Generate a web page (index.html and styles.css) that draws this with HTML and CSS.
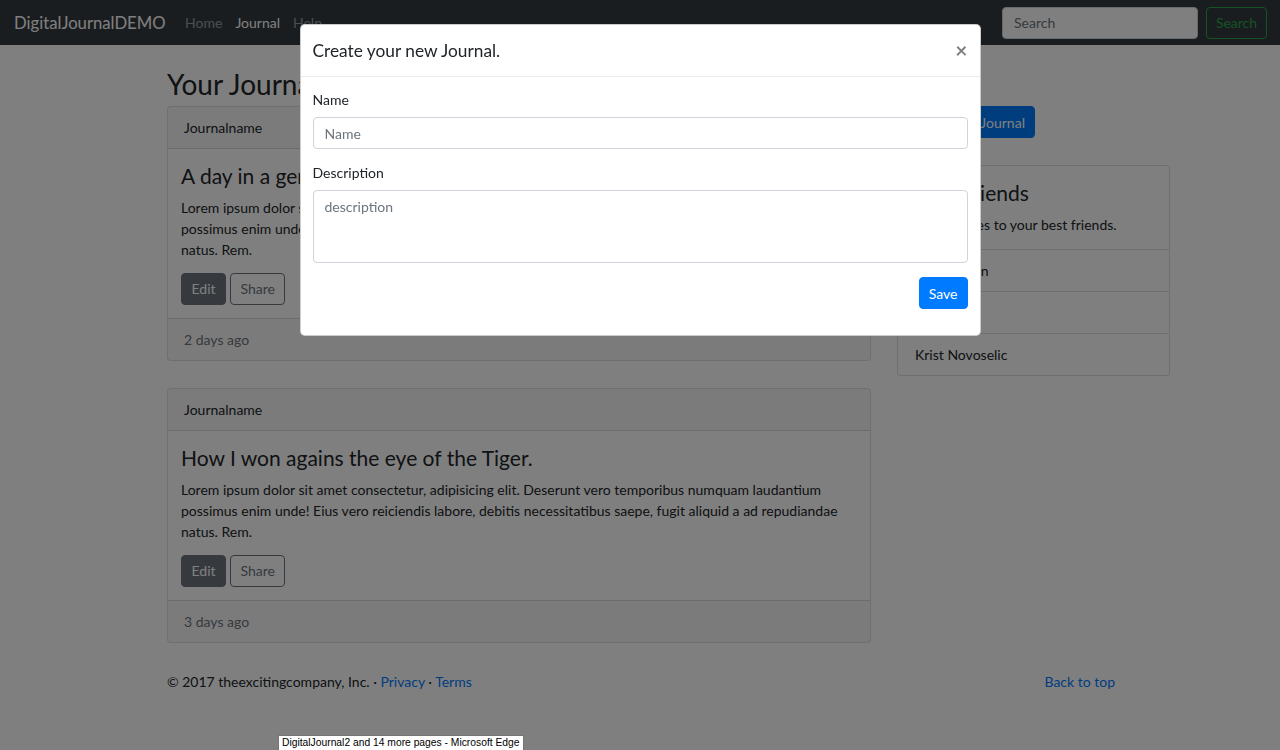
FILE: index.html
```html
<!DOCTYPE html>
<html lang="en">
<head>
<meta charset="utf-8">
<title>DigitalJournalDEMO</title>
<link rel="stylesheet" href="styles.css">
</head>
<body>
<nav class="navbar">
  <a class="brand" href="#">DigitalJournalDEMO</a>
  <ul class="nav-links">
    <li><a class="nav-link" href="#">Home</a></li>
    <li><a class="nav-link active" href="#">Journal</a></li>
    <li><a class="nav-link" href="#">Help</a></li>
  </ul>
  <form class="search-form">
    <input class="search-input" type="text" placeholder="Search">
    <button class="btn btn-outline-success" type="button">Search</button>
  </form>
</nav>

<main class="page">
  <div class="row">
    <section class="col-main">
      <h2 class="page-title">Your Journals</h2>

      <article class="card">
        <div class="card-header">Journalname</div>
        <div class="card-body">
          <h4 class="card-title">A day in a generic life.</h4>
          <p class="card-text">Lorem ipsum dolor sit amet consectetur, adipisicing elit. Deserunt vero temporibus numquam laudantium possimus enim unde! Eius vero reiciendis labore, debitis necessitatibus saepe, fugit aliquid a ad repudiandae natus. Rem.</p>
          <div class="card-actions">
            <button class="btn btn-secondary" type="button">Edit</button>
            <button class="btn btn-outline-secondary" type="button">Share</button>
          </div>
        </div>
        <div class="card-footer">2 days ago</div>
      </article>

      <article class="card">
        <div class="card-header">Journalname</div>
        <div class="card-body">
          <h4 class="card-title">How I won agains the eye of the Tiger.</h4>
          <p class="card-text">Lorem ipsum dolor sit amet consectetur, adipisicing elit. Deserunt vero temporibus numquam laudantium possimus enim unde! Eius vero reiciendis labore, debitis necessitatibus saepe, fugit aliquid a ad repudiandae natus. Rem.</p>
          <div class="card-actions">
            <button class="btn btn-secondary" type="button">Edit</button>
            <button class="btn btn-outline-secondary" type="button">Share</button>
          </div>
        </div>
        <div class="card-footer">3 days ago</div>
      </article>
    </section>

    <aside class="col-side">
      <button class="btn btn-primary create-btn" type="button">Create new Journal</button>
      <div class="card side-card">
        <div class="card-body side-body">
          <h4 class="card-title">Best Friends</h4>
          <p class="card-text side-text">Send stories to your best friends.</p>
        </div>
        <ul class="list-group">
          <li class="list-item">Kurt Cobain</li>
          <li class="list-item">Pat Smear</li>
          <li class="list-item">Krist Novoselic</li>
        </ul>
      </div>
    </aside>
  </div>

  <footer class="site-footer">
    <p class="footer-copy">&copy; 2017 theexcitingcompany, Inc. &middot; <a href="#">Privacy</a> &middot; <a href="#">Terms</a></p>
    <p class="footer-top"><a href="#">Back to top</a></p>
  </footer>
</main>

<div class="modal-backdrop"></div>
<div class="modal">
  <div class="modal-dialog">
    <div class="modal-header">
      <h5 class="modal-title">Create your new Journal.</h5>
      <button class="close" type="button" aria-label="Close">&times;</button>
    </div>
    <div class="modal-body">
      <div class="form-group">
        <label class="form-label" for="jname">Name</label>
        <input class="form-control" id="jname" type="text" placeholder="Name">
      </div>
      <div class="form-group">
        <label class="form-label" for="jdesc">Description</label>
        <textarea class="form-control textarea" id="jdesc" placeholder="description"></textarea>
      </div>
      <div class="form-actions">
        <button class="btn btn-primary save-btn" type="button">Save</button>
      </div>
    </div>
  </div>
</div>

<div class="taskbar-tip">DigitalJournal2 and 14 more pages - Microsoft Edge</div>
</body>
</html>
```

FILE: styles.css
```css
* { box-sizing: border-box; }

html, body {
  margin: 0;
  padding: 0;
  height: 100%;
  overflow: hidden;
}

body {
  font-family: Lato, "Noto Sans", sans-serif;
  font-size: 14px;
  line-height: 1.5;
  color: #212529;
  background: #fff;
}

a { color: #007bff; text-decoration: none; }

/* ---------- navbar ---------- */
.navbar {
  height: 45px;
  background: #343a40;
  display: flex;
  align-items: center;
  padding: 0 13px 0 14px;
}
.brand {
  color: #fff;
  font-size: 16.7px;
  line-height: 26px;
  margin-right: 13px;
}
.nav-links {
  display: flex;
  list-style: none;
  margin: 0;
  padding: 0;
  flex: 1;
}
.nav-link {
  display: block;
  padding: 0 6.5px;
  color: rgba(255,255,255,.5);
}
.nav-link.active { color: #fff; }

.search-form {
  display: flex;
  align-items: center;
  gap: 8px;
}
.search-input {
  width: 196px;
  height: 32px;
  border: 1px solid #ced4da;
  border-radius: 4px;
  padding: 4px 11px;
  font: inherit;
  color: #495057;
  background: #fff;
}
.search-input::placeholder { color: #6c757d; }

/* ---------- buttons ---------- */
.btn {
  display: inline-block;
  font: inherit;
  line-height: 21px;
  padding: 4.5px 9.5px;
  border: 1px solid transparent;
  border-radius: 4px;
  background: transparent;
  cursor: pointer;
}
.btn-outline-success {
  color: #28a745;
  border-color: #28a745;
  width: 61px;
  height: 32px;
  padding: 0;
}
.btn-secondary {
  color: #fff;
  background: #6c757d;
  border-color: #6c757d;
}
.btn-outline-secondary {
  color: #6c757d;
  border-color: #6c757d;
}
.btn-primary {
  color: #fff;
  background: #007bff;
  border-color: #007bff;
}

/* ---------- page layout ---------- */
.page {
  margin-left: 167px;
  width: 1003px;
  padding-top: 23px;
}
.row {
  display: flex;
  gap: 26px;
  align-items: flex-start;
}
.col-main { width: 704px; }
.col-side {
  width: 273px;
  padding-top: 38px;
}

.page-title {
  font-size: 28px;
  font-weight: 400;
  line-height: 1.2;
  margin: 0 0 4px;
}

/* ---------- cards ---------- */
.card {
  border: 1px solid rgba(0,0,0,.125);
  border-radius: 4px;
  background: #fff;
  margin-bottom: 27px;
}
.card-header {
  padding: 10px 16px;
  background: rgba(0,0,0,.03);
  border-bottom: 1px solid rgba(0,0,0,.125);
}
.card-body { padding: 14px 14px 13px 13px; }
.card-title {
  font-size: 21px;
  font-weight: 400;
  line-height: 1.2;
  margin: 0 0 9px;
}
.card-text { margin: 0 0 13px; }
.card-actions {
  display: flex;
  gap: 4px;
}
.card-footer {
  padding: 10px 16px;
  background: rgba(0,0,0,.03);
  border-top: 1px solid rgba(0,0,0,.125);
  color: #6c757d;
}

.create-btn { margin-bottom: 27px; padding: 4.5px 9px; }
.side-card { margin-bottom: 0; }
.side-body { padding: 14px 17px; }
.side-text { margin-bottom: 0; }
.list-group {
  list-style: none;
  margin: 0;
  padding: 0;
}
.list-item {
  padding: 10px 17px;
  border-top: 1px solid rgba(0,0,0,.125);
}

/* ---------- footer ---------- */
.site-footer {
  width: 948px;
  display: flex;
  justify-content: space-between;
  padding-top: 1px;
}
.site-footer p { margin: 0; }

/* ---------- modal ---------- */
.modal-backdrop {
  position: fixed;
  inset: 0;
  background: rgba(0,0,0,.5);
  z-index: 10;
}
.modal {
  position: fixed;
  inset: 0;
  z-index: 20;
}
.modal-dialog {
  width: 681px;
  margin: 24px auto 0;
  background: #fff;
  border: 1px solid rgba(0,0,0,.2);
  border-radius: 5px;
}
.modal-header {
  display: flex;
  justify-content: space-between;
  align-items: flex-start;
  padding: 13px 12px 13px 12px;
  border-bottom: 1px solid #e9ecef;
}
.modal-title {
  margin: 0;
  font-size: 17.3px;
  font-weight: 400;
  line-height: 25px;
}
.close {
  border: 0;
  background: transparent;
  padding: 0;
  margin-top: -1px;
  font-family: Lato, sans-serif;
  font-size: 21px;
  font-weight: 700;
  line-height: 25px;
  color: #000;
  opacity: .5;
  cursor: pointer;
}
.modal-body { padding: 12px 12px 13px; }
.form-group { margin-bottom: 13px; }
.form-label {
  display: block;
  margin-bottom: 7px;
}
.form-control {
  display: block;
  width: 100%;
  height: 32px;
  padding: 4.5px 11px;
  font: inherit;
  color: #495057;
  background: #fff;
  border: 1px solid #ced4da;
  border-radius: 4px;
}
.form-control::placeholder { color: #6c757d; }
.textarea {
  height: 73px;
  resize: none;
  padding-top: 5px;
}
.form-actions {
  display: flex;
  justify-content: flex-end;
  padding-top: 1px;
  margin-bottom: 13px;
}
.save-btn { padding: 4.5px 9px; height: 32px; }

/* ---------- OS taskbar tooltip ---------- */
.taskbar-tip {
  position: fixed;
  left: 278px;
  top: 735px;
  z-index: 30;
  background: #fff;
  border: 1px solid #767676;
  padding: 1px 3px 4px;
  font-family: "Liberation Sans", sans-serif;
  font-size: 10.3px;
  line-height: 12px;
  color: #000;
  white-space: nowrap;
}
```
